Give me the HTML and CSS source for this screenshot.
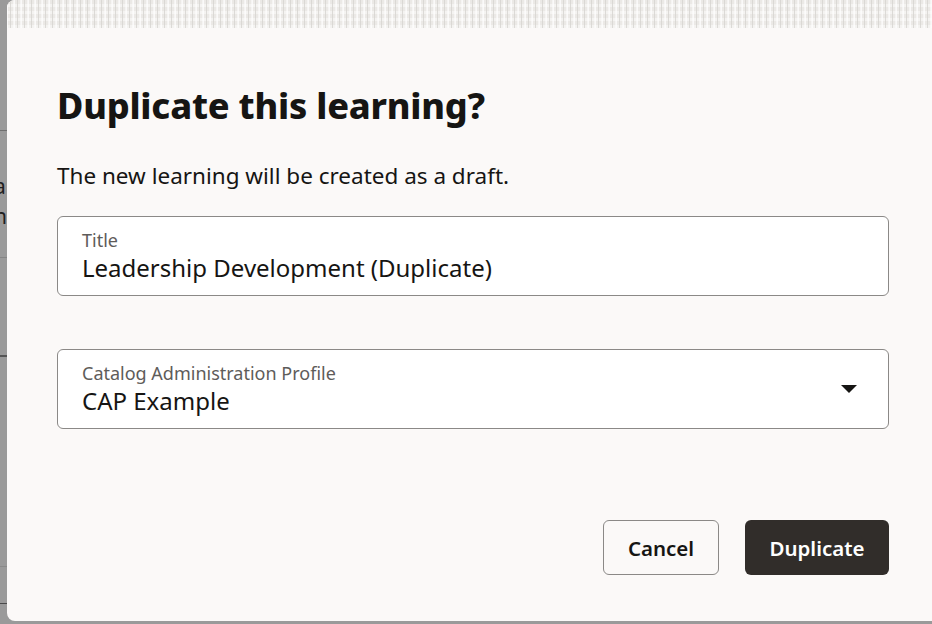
FILE: index.html
```html
<!DOCTYPE html>
<html lang="en">
<head>
  <meta charset="UTF-8" />
  <meta name="viewport" content="width=device-width, initial-scale=1.0"/>
  <title>Duplicate this learning?</title>
  <link rel="stylesheet" href="styles.css">
</head>
<body>
  <div class="page">
    <div class="backdrop">
      <div class="bd-row bd-first"></div>
      <div class="bd-row bd-text">
        <span>a</span>
        <span>n</span>
      </div>
      <div class="bd-row bd-mid"></div>
      <div class="bd-row bd-low"></div>
      <div class="bd-row bd-last"></div>
    </div>

    <div class="dialog">
      <div class="dialog-band"></div>
      <div class="dialog-body">
        <h1>Duplicate this learning?</h1>
        <p class="intro">The new learning will be created as a draft.</p>

        <div class="field">
          <label for="title">Title</label>
          <input id="title" type="text" value="Leadership Development (Duplicate)" />
        </div>

        <div class="field select-field">
          <div class="select-text">
            <label>Catalog Administration Profile</label>
            <div class="select-value">CAP Example</div>
          </div>
          <svg class="caret" width="18" height="10" viewBox="0 0 18 10">
            <path d="M1 1 L17 1 L9 9 Z" fill="#161513"/>
          </svg>
        </div>

        <div class="actions">
          <button class="btn btn-outline">Cancel</button>
          <button class="btn btn-solid">Duplicate</button>
        </div>
      </div>
    </div>
  </div>
</body>
</html>
```

FILE: styles.css
```css
body {
  margin: 0;
  font-family: 'Noto Sans', 'Open Sans', sans-serif;
  background-color: #9a9a9a;
  color: #161513;
}

.page {
  display: flex;
  height: 624px;
  overflow: hidden;
}

.backdrop {
  width: 7px;
  flex-shrink: 0;
  display: flex;
  flex-direction: column;
  background-color: #9a9a9a;
  overflow: hidden;
}

.bd-row {
  border-bottom: 1px solid #6f6f6f;
}

.bd-first {
  height: 130px;
}

.bd-text {
  height: 127px;
  border-bottom-color: #858585;
  display: flex;
  flex-direction: column;
  padding-top: 40px;
  box-sizing: border-box;
  font-size: 21px;
  line-height: 30px;
  color: #1f1f1f;
  text-indent: -6px;
}

.bd-mid {
  height: 97px;
  border-bottom-color: #555;
  border-bottom-width: 2px;
}

.bd-low {
  height: 209px;
  border-bottom-color: #8a8a8a;
}

.bd-last {
  height: 36px;
  border-bottom-color: #4a4a4a;
}

.dialog {
  flex: 1;
  display: flex;
  flex-direction: column;
  background-color: #fbf9f8;
  border-radius: 8px 0 0 8px;
  overflow: hidden;
  height: 621px;
}

.dialog-band {
  height: 28px;
  flex-shrink: 0;
  background-color: #ebe9e6;
  background-image:
    repeating-linear-gradient(90deg, rgba(255,255,255,0.75) 0 1px, transparent 1px 3px, rgba(214,212,208,0.8) 3px 4px, transparent 4px 6px, rgba(255,255,255,0.5) 6px 7px),
    repeating-linear-gradient(0deg, rgba(255,255,255,0.45) 0 3px, transparent 3px 7px);
}

.dialog-body {
  display: flex;
  flex-direction: column;
  padding: 0 43px 0 50px;
}

h1 {
  margin: 54px 0 0;
  font-size: 36px;
  line-height: 48px;
  font-weight: 800;
  letter-spacing: -0.2px;
}

.intro {
  margin: 31px 0 0;
  font-size: 22.5px;
  line-height: 30px;
}

.field {
  margin-top: 25px;
  display: flex;
  flex-direction: column;
  height: 80px;
  box-sizing: border-box;
  padding: 12px 24px 0;
  border: 1px solid #8b8987;
  border-radius: 6px;
  background-color: #fff;
}

label {
  font-size: 18px;
  line-height: 22px;
  color: #5e5c5a;
}

input {
  border: none;
  outline: none;
  padding: 0;
  margin: 2px 0 0;
  font-family: inherit;
  font-size: 24px;
  line-height: 30px;
  color: #161513;
  background: transparent;
}

.select-field {
  margin-top: 53px;
  flex-direction: row;
  align-items: center;
  justify-content: space-between;
  padding: 0 30px 0 24px;
}

.select-text {
  display: flex;
  flex-direction: column;
  padding-top: 0;
}

.select-value {
  margin-top: 2px;
  font-size: 24px;
  line-height: 30px;
}

.actions {
  margin-top: 91px;
  display: flex;
  justify-content: flex-end;
  gap: 26px;
}

.btn {
  height: 55px;
  padding: 0 20px;
  border-radius: 6px;
  font-family: inherit;
  font-size: 20.5px;
  font-weight: 600;
  cursor: pointer;
}

.btn-outline {
  width: 116px;
  background-color: #fbf9f8;
  border: 1px solid #8b8987;
  color: #161513;
}

.btn-solid {
  width: 144px;
  background-color: #312d2a;
  border: none;
  color: #fff;
}
```
